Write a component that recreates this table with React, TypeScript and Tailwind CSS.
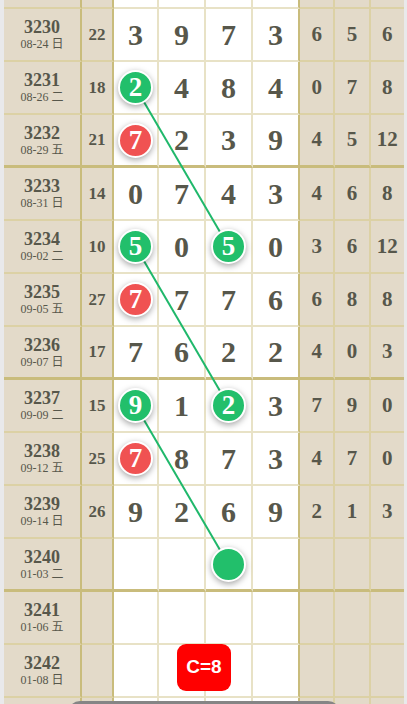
import React from 'react';

type Row = { p: string; d: string; s: string; m: string[]; r: string[] };

// g = green ball, r = red ball, plain = digit
const rows: Row[] = [
  { p: '3230', d: '08-24 日', s: '22', m: ['3', '9', '7', '3'], r: ['6', '5', '6'] },
  { p: '3231', d: '08-26 二', s: '18', m: ['g2', '4', '8', '4'], r: ['0', '7', '8'] },
  { p: '3232', d: '08-29 五', s: '21', m: ['r7', '2', '3', '9'], r: ['4', '5', '12'] },
  { p: '3233', d: '08-31 日', s: '14', m: ['0', '7', '4', '3'], r: ['4', '6', '8'] },
  { p: '3234', d: '09-02 二', s: '10', m: ['g5', '0', 'g5', '0'], r: ['3', '6', '12'] },
  { p: '3235', d: '09-05 五', s: '27', m: ['r7', '7', '7', '6'], r: ['6', '8', '8'] },
  { p: '3236', d: '09-07 日', s: '17', m: ['7', '6', '2', '2'], r: ['4', '0', '3'] },
  { p: '3237', d: '09-09 二', s: '15', m: ['g9', '1', 'g2', '3'], r: ['7', '9', '0'] },
  { p: '3238', d: '09-12 五', s: '25', m: ['r7', '8', '7', '3'], r: ['4', '7', '0'] },
  { p: '3239', d: '09-14 日', s: '26', m: ['9', '2', '6', '9'], r: ['2', '1', '3'] },
  { p: '3240', d: '01-03 二', s: '', m: ['', '', 'g', ''], r: ['', '', ''] },
  { p: '3241', d: '01-06 五', s: '', m: ['', '', '', ''], r: ['', '', ''] },
  { p: '3242', d: '01-08 日', s: '', m: ['', '', '', ''], r: ['', '', ''] },
];

const serif = "font-['Liberation_Serif','Noto_Sans_CJK_SC',serif]";

function Ball({ v }: { v: string }) {
  const color = v[0] === 'g' ? 'bg-[#22bf6b]' : 'bg-[#f05252]';
  return (
    <div
      className={`relative z-20 w-[35px] h-[35px] rounded-full border-2 border-white shadow-[0_2px_6px_rgba(0,0,0,0.35)] flex items-center justify-center text-white font-bold text-[27px] leading-none ${color}`}
    >
      {v.slice(1)}
    </div>
  );
}

function MainCell({ v, w, last, thick }: { v: string; w: string; last: boolean; thick: boolean }) {
  const rb = last ? 'border-r-2 border-r-[#c9bc7c]' : 'border-r-2 border-r-[#e8e2c6]';
  const bb = thick ? 'border-b-[3px] border-b-[#c9bc7c]' : 'border-b-2 border-b-[#e8e2c6]';
  const ball = v && (v[0] === 'g' || v[0] === 'r');
  return (
    <div className={`${w} shrink-0 h-full bg-white flex items-center justify-center ${rb} ${bb}`}>
      {ball ? <Ball v={v} /> : <span className="text-[30px] font-bold text-[#57574b] leading-none">{v}</span>}
    </div>
  );
}

function TableRow({ row, thick }: { row: Row; thick: boolean }) {
  const bbBeige = thick ? 'border-b-[3px] border-b-[#c9bc7c]' : 'border-b-2 border-b-[#dcd1a5]';
  const widths = ['w-[45px]', 'w-[47px]', 'w-[47px]', 'w-[47px]'];
  return (
    <div className="relative flex h-[53px]">
      <div className={`w-[78px] shrink-0 h-full border-r-2 border-r-[#c9bc7c] ${bbBeige} flex flex-col items-center justify-center text-[#57574b]`}>
        <div className="text-[18px] font-bold leading-[20px]">{row.p}</div>
        <div className="text-[12px] leading-[15px]">{row.d}</div>
      </div>
      <div className={`w-[32px] shrink-0 h-full border-r-2 border-r-[#c9bc7c] ${bbBeige} flex items-center justify-center text-[17px] font-bold text-[#57574b]`}>
        {row.s}
      </div>
      {row.m.map((v, i) => (
        <MainCell key={i} v={v} w={widths[i]} last={i === 3} thick={thick} />
      ))}
      {row.r.map((v, i) => (
        <div
          key={i}
          className={`flex-1 h-full ${i < 2 ? 'border-r-2 border-r-[#dcd1a5]' : ''} ${bbBeige} flex items-center justify-center text-[21px] font-bold text-[#57574b]`}
        >
          {v}
        </div>
      ))}
      {row.p === '3242' && (
        <div className="absolute z-30 left-[173px] top-[-1px] w-[54px] h-[47px] rounded-[9px] bg-[#ff0000] flex items-center justify-center text-white text-[19px] font-bold font-['Liberation_Sans',sans-serif]">
          C=8
        </div>
      )}
    </div>
  );
}

function EmptyRow({ h, border }: { h: string; border: boolean }) {
  const bbBeige = border ? 'border-b-2 border-b-[#dcd1a5]' : '';
  const bbWhite = border ? 'border-b-2 border-b-[#e8e2c6]' : '';
  return (
    <div className={`flex ${h}`}>
      <div className={`w-[78px] shrink-0 h-full border-r-2 border-r-[#c9bc7c] ${bbBeige}`} />
      <div className={`w-[32px] shrink-0 h-full border-r-2 border-r-[#c9bc7c] ${bbBeige}`} />
      <div className={`w-[45px] shrink-0 h-full bg-white border-r-2 border-r-[#e8e2c6] ${bbWhite}`} />
      <div className={`w-[47px] shrink-0 h-full bg-white border-r-2 border-r-[#e8e2c6] ${bbWhite}`} />
      <div className={`w-[47px] shrink-0 h-full bg-white border-r-2 border-r-[#e8e2c6] ${bbWhite}`} />
      <div className={`w-[47px] shrink-0 h-full bg-white border-r-2 border-r-[#c9bc7c] ${bbWhite}`} />
      <div className={`flex-1 h-full border-r-2 border-r-[#dcd1a5] ${bbBeige}`} />
      <div className={`flex-1 h-full border-r-2 border-r-[#dcd1a5] ${bbBeige}`} />
      <div className={`flex-1 h-full ${bbBeige}`} />
    </div>
  );
}

export default function App() {
  // ball centres, relative to the table
  const x1 = 131.5;
  const x3 = 224.5;
  const cy = (i: number) => 9 + 53 * i + 25.5;
  const links = [
    [x1, cy(1), x3, cy(4)],
    [x1, cy(4), x3, cy(7)],
    [x1, cy(7), x3, cy(10)],
  ];

  return (
    <div className={`relative w-[407px] h-[704px] overflow-hidden bg-[#e9e9eb] ${serif}`}>
      <div className="relative ml-[4px] w-[400px] bg-[#e3dac9]">
        <EmptyRow h="h-[9px]" border />
        {rows.map((row, i) => (
          <TableRow key={row.p} row={row} thick={i === 2 || i === 6 || i === 10} />
        ))}
        <EmptyRow h="h-[20px]" border={false} />
        <svg className="absolute inset-0 z-10 pointer-events-none" width="400" height="724">
          {links.map(([a, b, c, d], i) => (
            <line key={i} x1={a} y1={b} x2={c} y2={d} stroke="#1fb86b" strokeWidth="2" />
          ))}
        </svg>
      </div>
      <div className="absolute z-40 left-[68px] top-[701px] w-[272px] h-[20px] rounded-t-[12px] bg-[#858585]" />
    </div>
  );
}
